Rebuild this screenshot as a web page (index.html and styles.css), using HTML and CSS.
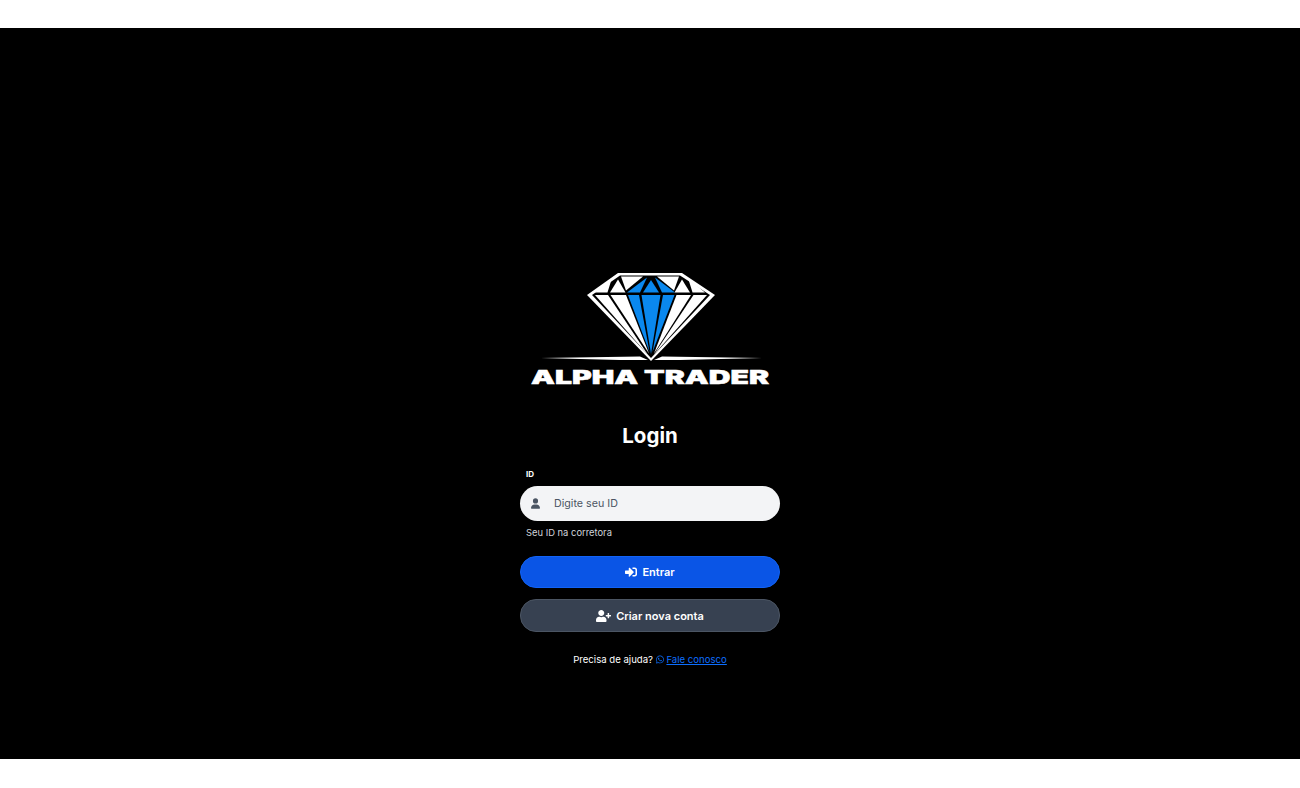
FILE: index.html
```html
<!DOCTYPE html>
<html lang="pt-BR">
<head>
<meta charset="utf-8">
<title>Login</title>
<link rel="stylesheet" href="styles.css">
</head>
<body>
<main class="stage">
  <div class="card">
    <svg class="logo" viewBox="530 270 240 116" role="img" aria-label="Alpha Trader">
      <polygon class="w" points="618,273 682,273 715,295 651,361 587,295"/>
      <polygon class="k" points="620,275.500 680,275.500 710,295 651,358 592,295"/>
      <g class="w">
        <polygon points="612,278 607.500,292.500 595,292.500"/>
        <polygon points="688,278 692.500,292.500 705,292.500"/>
        <polygon points="618,279.500 625.500,292.500 610,292.500"/>
        <polygon points="682,279.500 690,292.500 674.500,292.500"/>
        <polygon points="621,276.500 643,276.500 626,290.500"/>
        <polygon points="657,276.500 679,276.500 674,290.500"/>
        <polygon points="595,295 608,295 648,355"/>
        <polygon points="610.500,295 626,295 649,353.500"/>
        <polygon points="676.500,295 691,295 654,353.500"/>
        <polygon points="693.500,295 707,295 654,354.500"/>
      </g>
      <g class="b">
        <polygon points="627,292.500 647,277.500 640,292.500"/>
        <polygon points="651,280 643,292.500 659,292.500"/>
        <polygon points="655,277.500 675,292.500 662,292.500"/>
        <polygon points="628,295 639,295 649.500,352"/>
        <polygon points="641.500,295 660.500,295 651,354"/>
        <polygon points="663,295 674.500,295 652.500,352"/>
      </g>
      <g class="w">
        <polygon points="541,358 640,356.500 648,360 620,360"/>
        <polygon points="762,358 662,356.500 654,360 680,360"/>
      </g>
      <text class="logo-text" x="531" y="383.500" textLength="238" lengthAdjust="spacingAndGlyphs">ALPHA TRADER</text>
    </svg>

    <h1 class="title">Login</h1>

    <form class="form">
      <label class="label" for="id">ID</label>
      <div class="field">
        <svg class="field-icon" viewBox="0 0 448 512"><path d="M224 256A128 128 0 1 0 224 0a128 128 0 1 0 0 256zm-45.700 48C79.800 304 0 383.800 0 482.300C0 498.700 13.300 512 29.700 512H418.300c16.400 0 29.700-13.300 29.700-29.700C448 383.800 368.200 304 269.700 304H178.300z"/></svg>
        <input class="input" id="id" type="text" placeholder="Digite seu ID">
      </div>
      <p class="hint">Seu ID na corretora</p>
      <button class="btn btn-primary" type="button">
        <svg class="btn-icon" viewBox="0 0 512 512"><path d="M416 448h-84c-6.600 0-12-5.400-12-12v-40c0-6.600 5.400-12 12-12h84c17.700 0 32-14.300 32-32V160c0-17.700-14.300-32-32-32h-84c-6.600 0-12-5.400-12-12V76c0-6.600 5.400-12 12-12h84c53 0 96 43 96 96v192c0 53-43 96-96 96zm-47-201L201 79c-15-15-41-4.500-41 17v96H24c-13.300 0-24 10.700-24 24v96c0 13.300 10.700 24 24 24h136v96c0 21.500 26 32 41 17l168-168c9.300-9.400 9.300-24.600 0-34z"/></svg>
        Entrar
      </button>
      <button class="btn btn-secondary" type="button">
        <svg class="btn-icon-wide" viewBox="0 0 640 512"><path d="M624 208h-64v-64c0-8.800-7.200-16-16-16h-32c-8.800 0-16 7.200-16 16v64h-64c-8.800 0-16 7.200-16 16v32c0 8.800 7.200 16 16 16h64v64c0 8.800 7.200 16 16 16h32c8.800 0 16-7.200 16-16v-64h64c8.800 0 16-7.200 16-16v-32c0-8.800-7.200-16-16-16zm-400 48c70.700 0 128-57.300 128-128S294.700 0 224 0 96 57.300 96 128s57.300 128 128 128zm89.600 32h-16.700c-22.200 10.200-46.900 16-72.900 16s-50.600-5.800-72.900-16h-16.700C60.200 288 0 348.200 0 422.400V464c0 26.500 21.500 48 48 48h352c26.500 0 48-21.500 48-48v-41.600c0-74.200-60.200-134.400-134.400-134.400z"/></svg>
        Criar nova conta
      </button>
    </form>

    <p class="help">Precisa de ajuda?
      <svg class="wa" viewBox="0 0 448 512"><path d="M380.900 97.100C339 55.100 283.200 32 223.900 32c-122.400 0-222 99.600-222 222 0 39.100 10.200 77.300 29.600 111L0 480l117.700-30.900c32.400 17.700 68.900 27 106.100 27h.1c122.300 0 224.100-99.600 224.100-222 0-59.300-25.200-115-67.100-157zm-157 341.600c-33.200 0-65.700-8.900-94-25.700l-6.700-4-69.800 18.300L72 359.200l-4.400-7c-18.500-29.400-28.200-63.300-28.200-98.200 0-101.700 82.800-184.500 184.600-184.500 49.300 0 95.600 19.200 130.400 54.100 34.800 34.900 56.200 81.200 56.100 130.500 0 101.800-84.900 184.600-186.600 184.600zm101.200-138.200c-5.500-2.800-32.800-16.200-37.900-18-5.100-1.900-8.800-2.800-12.500 2.800-3.700 5.600-14.300 18-17.600 21.800-3.200 3.700-6.500 4.200-12 1.400-32.600-16.300-54-29.100-75.500-66-5.700-9.800 5.700-9.100 16.300-30.300 1.800-3.700.9-6.900-.5-9.700-1.400-2.800-12.500-30.100-17.100-41.200-4.500-10.800-9.100-9.300-12.500-9.500-3.200-.2-6.900-.2-10.600-.2-3.700 0-9.700 1.400-14.800 6.900-5.100 5.600-19.400 19-19.400 46.300 0 27.300 19.900 53.700 22.600 57.400 2.800 3.700 39.100 59.700 94.800 83.800 35.200 15.200 49 16.500 66.600 13.900 10.700-1.600 32.800-13.400 37.400-26.400 4.600-13 4.600-24.100 3.200-26.400-1.300-2.500-5-3.900-10.500-6.600z"/></svg>
      <a class="link" href="#">Fale conosco</a>
    </p>
  </div>
</main>
</body>
</html>
```

FILE: styles.css
```css
* { box-sizing: border-box; }
html, body { margin: 0; height: 100%; background: #fff; }
body { padding: 28px 0 29px; font-family: Inter, "Liberation Sans", sans-serif; overflow: hidden; }
.stage { height: 731px; background: #000; display: flex; justify-content: center; padding-top: 242px; }
.card { width: 260px; display: flex; flex-direction: column; align-items: center; color: #fff; }
.logo { width: 240px; height: 116px; display: block; flex: none; overflow: visible; }
.w { fill: #fff; }
.k { fill: #000; }
.b { fill: #0a88ee; }
.logo-text { font-family: Inter, sans-serif; font-weight: 900; font-size: 19px; fill: #fff; stroke: #fff; stroke-width: .5px; }
.title { margin: 36px 0 0; font-size: 20.500px; line-height: 28px; font-weight: 700; text-align: center; }
.form { width: 100%; margin-top: 18px; display: flex; flex-direction: column; }
.label { padding-left: 6px; font-size: 8px; line-height: 12px; font-weight: 700; }
.field { position: relative; margin-top: 6px; }
.field-icon { position: absolute; left: 11px; top: 12px; width: 9px; height: 11px; fill: #4b5563; }
.input { display: block; width: 100%; height: 35px; padding: 0 12px 0 34px; border: 0; border-radius: 18px; background: #f3f4f6; color: #111827; font: 400 10.700px Inter, sans-serif; }
.input::placeholder { color: #4b5563; opacity: 1; }
.hint { margin: 6px 0 0; padding-left: 6px; font-size: 9.400px; line-height: 12px; color: #d1d5db; }
.btn { display: flex; align-items: center; justify-content: center; gap: 5px; width: 100%; height: 32px; border-radius: 16px; border: 1px solid; color: #fff; font: 600 11px Inter, sans-serif; }
.btn-primary { margin-top: 17px; background: #0a55e6; border-color: #1263f5; }
.btn-secondary { margin-top: 11px; height: 33px; background: #374151; border-color: #4b5563; }
.btn-icon { width: 12px; height: 12px; fill: #fff; }
.btn-icon-wide { width: 15px; height: 12px; fill: #fff; }
.help { margin: 21px 0 0; font-size: 9.600px; line-height: 14px; text-align: center; color: #fff; }
.wa { display: inline-block; vertical-align: -1px; width: 8px; height: 9px; fill: #0d6efd; }
.link { color: #0d6efd; text-decoration: underline; }
```
